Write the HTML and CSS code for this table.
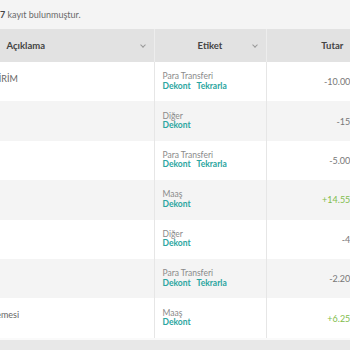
FILE: index.html
```html
<!DOCTYPE html>
<html lang="tr">
<head>
    <meta charset="UTF-8">
    <meta name="viewport" content="width=device-width, initial-scale=1.0">
    <title>Hesap Hareketleri</title>
    <link rel="stylesheet" href="styles.css">
</head>
<body>
    <div class="page">
        <p class="result-info"><strong>7</strong> kayıt bulunmuştur.</p>

        <table class="movements">
            <colgroup>
                <col class="col-desc">
                <col class="col-tag">
                <col class="col-amount">
            </colgroup>
            <thead>
                <tr>
                    <th>Açıklama <span class="sort"></span></th>
                    <th>Etiket <span class="sort"></span></th>
                    <th>Tutar</th>
                </tr>
            </thead>
            <tbody>
                <tr>
                    <td class="desc">FAST HAVALESİ İNDİRİM</td>
                    <td class="tag">Para Transferi<div class="links"><a href="#">Dekont</a><a href="#">Tekrarla</a></div></td>
                    <td class="amount">-10.000,00 TL</td>
                </tr>
                <tr>
                    <td class="desc">Kart aidatı</td>
                    <td class="tag">Diğer<div class="links"><a href="#">Dekont</a></div></td>
                    <td class="amount">-150,00 TL</td>
                </tr>
                <tr>
                    <td class="desc">Kira</td>
                    <td class="tag">Para Transferi<div class="links"><a href="#">Dekont</a><a href="#">Tekrarla</a></div></td>
                    <td class="amount">-5.000,00 TL</td>
                </tr>
                <tr>
                    <td class="desc">Maaş</td>
                    <td class="tag">Maaş<div class="links"><a href="#">Dekont</a></div></td>
                    <td class="amount plus">+14.550,00 TL</td>
                </tr>
                <tr>
                    <td class="desc">Hesap ücreti</td>
                    <td class="tag">Diğer<div class="links"><a href="#">Dekont</a></div></td>
                    <td class="amount">-45,00 TL</td>
                </tr>
                <tr>
                    <td class="desc">Aidat</td>
                    <td class="tag">Para Transferi<div class="links"><a href="#">Dekont</a><a href="#">Tekrarla</a></div></td>
                    <td class="amount">-2.200,00 TL</td>
                </tr>
                <tr>
                    <td class="desc">Performans primi ödemesi</td>
                    <td class="tag">Maaş<div class="links"><a href="#">Dekont</a></div></td>
                    <td class="amount plus">+6.250,00 TL</td>
                </tr>
            </tbody>
        </table>

        <div class="table-footer"></div>
    </div>
</body>
</html>
```

FILE: styles.css
```css
body {
    margin: 0;
    font-family: Lato, "Liberation Sans", sans-serif;
    background: #f4f4f4;
    color: #666;
    overflow: hidden;
}

/* the table is wider than the window and scrolled to the right */
.page {
    margin-left: -102px;
    width: 500px;
}

.result-info {
    margin: 0;
    height: 29px;
    line-height: 29px;
    padding-left: 102px;
    font-size: 9px;
    color: #6a6a6a;
}

.result-info strong {
    color: #444;
}

.movements {
    width: 100%;
    border-collapse: collapse;
    table-layout: fixed;
}

.col-desc {
    width: 256px;
}

.col-tag {
    width: 112px;
}

.movements th {
    position: relative;
    height: 33px;
    padding: 0;
    background: #e2e2e2;
    font-size: 9.5px;
    font-weight: 700;
    color: #444;
    text-align: center;
    border-left: 1px solid #ededed;
}

.movements th:first-child {
    border-left: none;
}

.sort {
    position: absolute;
    right: 9px;
    top: 14px;
    width: 3px;
    height: 3px;
    border-right: 1px solid #999;
    border-bottom: 1px solid #999;
    transform: rotate(45deg);
}

.movements td {
    height: 39.4px;
    box-sizing: border-box;
    padding: 0 10px;
    font-size: 9px;
    border-left: 1px solid #e6e6e6;
    background: #fff;
    white-space: nowrap;
}

.movements td:first-child {
    border-left: none;
}

.movements tbody tr:nth-child(even) td {
    background: #f4f4f4;
}

.desc {
    vertical-align: top;
    padding-top: 11px !important;
    padding-left: 18px !important;
    color: #666;
}

.tag {
    vertical-align: middle;
    padding-left: 8px !important;
    color: #8a8a8a;
    font-size: 8.5px !important;
    line-height: 9.5px;
}

.links a {
    color: #2aa5a0;
    font-weight: 700;
    text-decoration: none;
    margin-right: 6px;
}

.amount {
    text-align: right;
    vertical-align: middle;
    color: #777;
    padding-right: 18px !important;
}

.amount.plus {
    color: #82bd4c;
}

.table-footer {
    height: 12px;
    border-top: 2px solid #fafafa;
    background: #e8e8e8;
}
```
